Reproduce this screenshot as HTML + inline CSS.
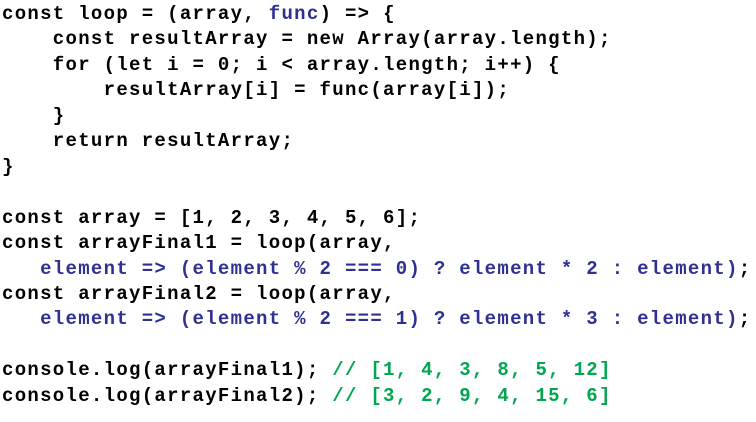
<!DOCTYPE html>
<html><head><meta charset="utf-8"><style>
html,body{margin:0;padding:0;background:#fff;width:756px;height:422px;overflow:hidden}
pre{margin:0;position:absolute;left:2px;top:2px;font-family:"Liberation Mono","Courier New",monospace;font-weight:bold;font-size:19px;letter-spacing:1.3px;line-height:25.45px;color:#000}
.b{color:#2e3192}.g{color:#00a650}
</style></head><body>
<pre>const loop = (array, <span class="b">func</span>) => {
    const resultArray = new Array(array.length);
    for (let i = 0; i &lt; array.length; i++) {
        resultArray[i] = func(array[i]);
    }
    return resultArray;
}

const array = [1, 2, 3, 4, 5, 6];
const arrayFinal1 = loop(array,
   <span class="b">element => (element % 2 === 0) ? element * 2 : element)</span>;
const arrayFinal2 = loop(array,
   <span class="b">element => (element % 2 === 1) ? element * 3 : element)</span>;

console.log(arrayFinal1); <span class="g">// [1, 4, 3, 8, 5, 12]</span>
console.log(arrayFinal2); <span class="g">// [3, 2, 9, 4, 15, 6]</span></pre>
</body></html>
